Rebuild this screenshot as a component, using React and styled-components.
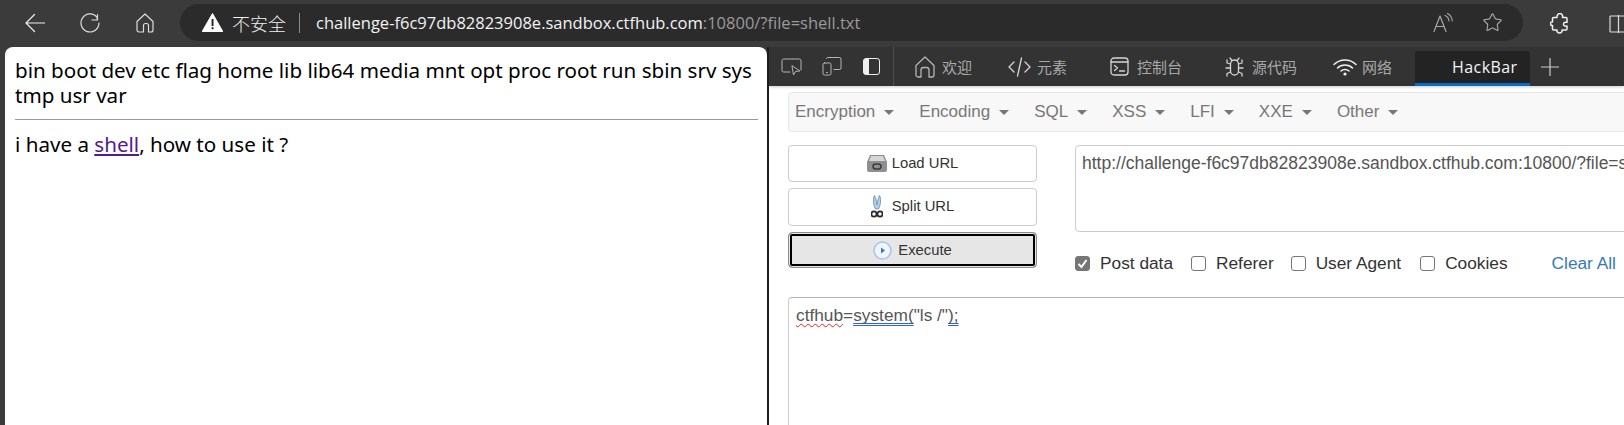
import styled, { createGlobalStyle } from "styled-components";
import { Star } from "lucide-react";

const Global = createGlobalStyle`
  html, body {
    margin: 0;
    padding: 0;
    background: #3b3b3b;
    overflow: hidden;
  }
`;

const Shell = styled.div`
  width: 1624px;
  height: 425px;
  display: flex;
  flex-direction: column;
  background: #3b3b3b;
  overflow: hidden;
`;

const TopBar = styled.div`
  height: 47px;
  flex: none;
  display: flex;
  align-items: flex-start;
  padding-left: 25px;
  box-sizing: border-box;
`;

const TopIcon = styled.svg`
  flex: none;
  margin-top: ${(p) => p.$top ?? 13}px;
  margin-left: ${(p) => p.$gap ?? 0}px;
`;

const Pill = styled.div`
  width: 1343px;
  height: 37px;
  margin: 4px 0 0 26px;
  flex: none;
  border-radius: 19px;
  background: #2b2b2b;
  display: flex;
  align-items: center;
  padding: 0 20px 0 22px;
  box-sizing: border-box;
`;

const Insecure = styled.span`
  margin-left: 9px;
  font: 300 18px "Noto Sans CJK SC", sans-serif;
  color: #f0f0f0;
`;

const PillSep = styled.span`
  width: 1px;
  height: 20px;
  background: #8a8a8a;
  margin: 0 16px 0 13px;
`;

const Url = styled.span`
  font: 16.5px "Open Sans", sans-serif;
  color: #9a9a9a;
  white-space: nowrap;

  b {
    font-weight: 400;
    color: #f2f2f2;
  }
`;

const PillRight = styled.div`
  margin-left: auto;
  display: flex;
  align-items: center;
  gap: 29px;
  color: #a8a8a8;
`;

const BarSep = styled.span`
  width: 1px;
  height: 20px;
  background: #666;
  margin: 14px 0 0 20px;
`;

const Main = styled.div`
  flex: 1;
  display: flex;
  padding-left: 5px;
  min-height: 0;
`;

const Page = styled.div`
  width: 762px;
  flex: none;
  background: #fff;
  border-radius: 8px 8px 0 0;
  box-sizing: border-box;
  padding: 11px 9px 0 10px;
  font: 20.6px/25px "Noto Sans", sans-serif;
  color: #000;

  a {
    color: #551a8b;
    text-decoration: underline;
  }
`;

const Rule = styled.hr`
  margin: 11px 0 12px;
  border: 0;
  height: 1px;
  background: #999;
`;

const Devtools = styled.div`
  flex: 1;
  min-width: 0;
  border-left: 2px solid #1c1c1c;
  background: #fff;
  overflow: hidden;
  display: flex;
  flex-direction: column;
`;

const Toolbar = styled.div`
  height: 39px;
  flex: none;
  background: #333;
  display: flex;
  align-items: center;
  padding-left: 12px;
  box-shadow: 0 1px 3px rgba(0, 0, 0, 0.2);
  color: #b5b5b5;
`;

const ToolIcon = styled.svg`
  flex: none;
  margin-left: ${(p) => p.$gap ?? 0}px;
`;

const ToolSep = styled.span`
  width: 1px;
  height: 39px;
  background: #4c4c4c;
  margin: 0 21px 0 13px;
`;

const Tab = styled.div`
  display: flex;
  align-items: center;
  flex: none;
  gap: ${(p) => p.$gap}px;
  margin-right: ${(p) => p.$after}px;
  font: 15px "Noto Sans CJK SC", sans-serif;
  color: #a8a8a8;
`;

const ActiveTab = styled.div`
  width: 115px;
  height: 35px;
  flex: none;
  margin-top: 3px;
  box-sizing: border-box;
  background: #232323;
  border-bottom: 3px solid #0a6bc2;
  border-radius: 3px 3px 0 0;
  padding: 0 0 0 37px;
  display: flex;
  align-items: center;
  font: 16px "Open Sans", sans-serif;
  letter-spacing: 0.4px;
  color: #f5f5f5;
`;

const Body = styled.div`
  padding: 6px 0 0 19px;
  width: 1000px;
  font-family: "Liberation Sans", sans-serif;
`;

const Nav = styled.div`
  height: 40px;
  box-sizing: border-box;
  background: #f8f8f8;
  border: 1px solid #e7e7e7;
  border-radius: 4px;
  padding-left: 6px;
  display: flex;
  align-items: center;
  gap: 25px;
  font-size: 17px;
  color: #777;
`;

const NavItem = styled.span`
  display: flex;
  align-items: center;
  gap: 9px;

  &::after {
    content: "";
    border-top: 5px solid #777;
    border-left: 5px solid transparent;
    border-right: 5px solid transparent;
  }
`;

const Controls = styled.div`
  display: flex;
  gap: 38px;
  margin-top: 13px;
`;

const Buttons = styled.div`
  width: 249px;
  flex: none;
  display: flex;
  flex-direction: column;
  gap: 6px;
`;

const Button = styled.div`
  height: ${(p) => p.$h}px;
  box-sizing: border-box;
  display: flex;
  align-items: center;
  justify-content: center;
  gap: ${(p) => p.$gap}px;
  padding-bottom: ${(p) => p.$lift ?? 0}px;
  border: 1px solid ${(p) => (p.$active ? "#8c8c8c" : "#ccc")};
  border-radius: 4px;
  font-size: 14.8px;
  color: #333;
  background: ${(p) => (p.$active ? "#e6e6e6" : "#fff")};
  box-shadow: ${(p) =>
    p.$active ? "inset 0 0 0 1px #e6e6e6, inset 0 0 0 3px #000" : "none"};
`;

const Right = styled.div`
  flex: 1;
  min-width: 0;
`;

const UrlBox = styled.div`
  height: 87px;
  box-sizing: border-box;
  border: 1px solid #ccc;
  border-radius: 4px;
  padding: 7px 6px;
  font-size: 17.5px;
  line-height: 20px;
  color: #555;
  white-space: nowrap;
  overflow: hidden;
`;

const Checks = styled.div`
  display: flex;
  align-items: center;
  height: 20px;
  margin-top: 21px;
  font-size: 17.3px;
  color: #333;
`;

const Check = styled.label`
  display: flex;
  align-items: center;
  gap: 10px;
  margin-right: ${(p) => p.$after}px;
`;

const Box = styled.span`
  width: 15px;
  height: 15px;
  box-sizing: border-box;
  border-radius: 3px;
  border: 1px solid #767676;
  background: ${(p) => (p.$on ? "#767676" : "#fff")};
  display: flex;
  align-items: center;
  justify-content: center;
`;

const ClearAll = styled.a`
  color: #337ab7;
`;

const PostBox = styled.div`
  height: 140px;
  margin-top: 24px;
  box-sizing: border-box;
  border: 1px solid #ccc;
  border-top-color: #b5b5b5;
  border-radius: 4px;
  padding: 7px 7px;
  font-size: 17.3px;
  line-height: 20px;
  color: #555;
`;

const Wavy = styled.span`
  text-decoration: underline wavy #e22;
  text-decoration-thickness: 1px;
  text-decoration-skip-ink: none;
  text-underline-offset: 2px;
`;

const Double = styled.span`
  text-decoration: underline double #2f5fe8;
  text-decoration-thickness: 1px;
  text-decoration-skip-ink: none;
  text-underline-offset: 2px;
`;

const line = {
  fill: "none",
  stroke: "currentColor",
  strokeLinecap: "round",
  strokeLinejoin: "round",
};

const NAV = ["Encryption", "Encoding", "SQL", "XSS", "LFI", "XXE", "Other"];

const CHECKS = [
  { label: "Post data", on: true, after: 18 },
  { label: "Referer", after: 17 },
  { label: "User Agent", after: 19 },
  { label: "Cookies", after: 44 },
];

export default function App() {
  return (
    <Shell>
      <Global />
      <TopBar>
        <TopIcon width="20" height="20" viewBox="0 0 20 20" $top={13} style={{ color: "#eee" }}>
          <path d="M19.5 10H1M9.5 1.5 1 10l8.5 8.5" {...line} strokeWidth="1.2" />
        </TopIcon>
        <TopIcon width="20" height="20" viewBox="0 0 20 20" $gap={35} style={{ color: "#ddd" }}>
          <path d="M17.5 1.5v5.5h-5.5M19 10a9 9 0 1 1-2-5.7L17.5 7" {...line} strokeWidth="1.2" />
        </TopIcon>
        <TopIcon width="18" height="20" viewBox="0 0 18 20" $gap={36} style={{ color: "#ddd" }}>
          <path d="M1 8.5 9 1l8 7.5V17a2 2 0 0 1-2 2h-2.5v-6.5a2 2 0 0 0-2-2h-1a2 2 0 0 0-2 2V19H3a2 2 0 0 1-2-2Z" {...line} strokeWidth="1.2" />
        </TopIcon>
        <Pill>
          <svg width="21" height="19" viewBox="0 0 21 19">
            <path d="M10.5 0.5 20.8 18.5H0.2Z" fill="#fff" stroke="#fff" strokeLinejoin="round" />
            <rect x="9.6" y="6" width="1.9" height="7" fill="#222" />
            <rect x="9.6" y="14.2" width="1.9" height="2" fill="#222" />
          </svg>
          <Insecure>不安全</Insecure>
          <PillSep />
          <Url>
            <b>challenge-f6c97db82823908e.sandbox.ctfhub.com</b>:10800/?file=shell.txt
          </Url>
          <PillRight>
            <svg width="20" height="20" viewBox="0 0 20 20">
              <path d="M1 18.5 7 3l6 15.5M3 13.5h8" {...line} strokeWidth="1.2" />
              <path d="M12 2.5c2.5 1 3.8 3 4 5.5M14.5 0.5c3 1.5 4.5 4 4.8 7.5" {...line} strokeWidth="1.1" />
            </svg>
            <Star size={21} strokeWidth={1.3} />
          </PillRight>
        </Pill>
        <TopIcon width="20" height="21" viewBox="0 0 20 21" $gap={27} $top={13} style={{ color: "#f0f0f0" }}>
          <path
            d="M7 4.5H3.5a1 1 0 0 0-1 1V9c-1.300-.4-2 .6-2 1.700s.7 2.100 2 1.700V16a1 1 0 0 0 1 1H7c-.5 1.500.7 3 2.500 3s3-1.500 2.500-3h4a1 1 0 0 0 1-1v-3c-2 .6-3.500-.3-3.500-1.800S15 8.800 17 9.400V5.500a1 1 0 0 0-1-1h-3.500c.6-1.500-.6-4-2.600-4S6.700 3 7 4.500Z"
            {...line}
            strokeWidth="1.5"
          />
        </TopIcon>
        <BarSep />
        <TopIcon width="15" height="18" viewBox="0 0 15 18" $gap={19} $top={15} style={{ color: "#ddd" }}>
          <path d="M15 1H2a1 1 0 0 0-1 1v14a1 1 0 0 0 1 1h13M9.500 0v18" {...line} strokeWidth="1.2" />
        </TopIcon>
      </TopBar>
      <Main>
        <Page>
          bin boot dev etc flag home lib lib64 media mnt opt proc root run sbin srv sys tmp usr var
          <Rule />
          i have a <a href="#shell">shell</a>, how to use it ?
        </Page>
        <Devtools>
          <Toolbar>
            <ToolIcon width="21" height="18" viewBox="0 0 21 18">
              <path d="M9 14H2.500A1.500 1.500 0 0 1 1 12.500v-10A1.500 1.500 0 0 1 2.500 1h16A1.500 1.500 0 0 1 20 2.500V12" {...line} />
              <path d="M11 8l1.500 9 2-3.500 4-.5Z" {...line} />
            </ToolIcon>
            <ToolIcon width="20" height="19" viewBox="0 0 20 19" $gap={20}>
              <rect x="1" y="6" width="8" height="12" rx="1.500" {...line} />
              <path d="M4.500 1.500a1 1 0 0 1 1-1h12a1.500 1.500 0 0 1 1.500 1.500v9a1.500 1.500 0 0 1-1.500 1.500H12M4.500 15.500h1" {...line} />
            </ToolIcon>
            <ToolIcon width="17" height="17" viewBox="0 0 17 17" $gap={21}>
              <rect x="0.5" y="0.5" width="16" height="16" rx="2.5" fill="none" stroke="#eee" />
              <path d="M3 0.5h3v16H3a2.500 2.500 0 0 1-2.500-2.500V3A2.500 2.500 0 0 1 3 0.5Z" fill="#eee" />
            </ToolIcon>
            <ToolSep />
            <Tab $gap={7} $after={36}>
              <svg width="20" height="22" viewBox="0 0 20 22" color="#b5b5b5">
                <path d="M1 9.500 10 1l9 8.500V19a2 2 0 0 1-2 2h-3v-7a2.500 2.500 0 0 0-2.500-2.500h-3A2.500 2.500 0 0 0 6 14v7H3a2 2 0 0 1-2-2Z" {...line} strokeWidth="1.3" />
              </svg>
              欢迎
            </Tab>
            <Tab $gap={6} $after={43}>
              <svg width="23" height="20" viewBox="0 0 23 20" color="#d5d5d5">
                <path d="M6 5 1 10l5 5M17 5l5 5-5 5M13.500 1l-4 18" {...line} strokeWidth="1.3" />
              </svg>
              元素
            </Tab>
            <Tab $gap={8} $after={43}>
              <svg width="19" height="19" viewBox="0 0 19 19" color="#d5d5d5">
                <rect x="1" y="1" width="17" height="17" rx="3" {...line} strokeWidth="1.3" />
                <path d="M1 5h17M4.500 8.500 7.500 11l-3 2.500M9.500 14h5" {...line} strokeWidth="1.3" />
              </svg>
              控制台
            </Tab>
            <Tab $gap={8} $after={36}>
              <svg width="19" height="20" viewBox="0 0 19 20" color="#d5d5d5">
                <path d="M5.500 7a4 4 0 0 1 8 0v7a4 4 0 0 1-8 0ZM6.500 3 5 1M12.500 3 14 1M5.500 7 2 6V3M13.500 7 17 6V3M5.500 11H1M13.500 11H18M5.500 15 2 16.500V19M13.500 15l3.500 1.500V19" {...line} strokeWidth="1.3" />
              </svg>
              源代码
            </Tab>
            <Tab $gap={5} $after={23}>
              <svg width="24" height="18" viewBox="0 0 24 18" color="#eee">
                <path d="M1 6.500c6-6 16-6 22 0M4.500 10c4-4 11-4 15 0M8 13c2-2 6-2 8 0" {...line} strokeWidth="1.5" />
                <circle cx="12" cy="16" r="1.600" fill="currentColor" />
              </svg>
              网络
            </Tab>
            <ActiveTab>HackBar</ActiveTab>
            <ToolIcon width="18" height="18" viewBox="0 0 18 18" $gap={11} style={{ color: "#ccc" }}>
              <path d="M9 0.5v17M0.5 9h17" {...line} strokeWidth="1.2" />
            </ToolIcon>
          </Toolbar>
          <Body>
            <Nav>
              {NAV.map((item) => (
                <NavItem key={item}>{item}</NavItem>
              ))}
            </Nav>
            <Controls>
              <Buttons>
                <Button $h={37} $gap={5} $lift={2}>
                  <svg width="20" height="18" viewBox="0 0 20 18">
                    <path d="M3 1h14l3 7v8a2 2 0 0 1-2 2H2a2 2 0 0 1-2-2V8Z" fill="#8f8f8f" />
                    <path d="M4 2h12l2 5H2Z" fill="#d6d6d6" />
                    <rect x="6" y="10" width="8" height="5" rx="2.5" fill="none" stroke="#3c3c3c" strokeWidth="1.5" />
                  </svg>
                  Load URL
                </Button>
                <Button $h={38} $gap={9} $lift={2}>
                  <svg width="12" height="23" viewBox="0 0 12 23">
                    <path d="M3.500 0.500C2 3 1.800 9 4.500 14h3C10.200 9 10 3 8.500 0.500 7 3 6.500 7 6 10 5.500 7 5 3 3.500 0.500Z" fill="#b4d0e2" stroke="#5d8ba6" strokeWidth="0.8" />
                    <circle cx="3" cy="19" r="2.600" fill="none" stroke="#2a2a2a" strokeWidth="1.800" />
                    <circle cx="9" cy="19" r="2.600" fill="none" stroke="#2a2a2a" strokeWidth="1.800" />
                  </svg>
                  Split URL
                </Button>
                <Button $h={36} $gap={6} $active>
                  <svg width="19" height="19" viewBox="0 0 19 19">
                    <circle cx="9.5" cy="9.5" r="8.500" fill="#f0f5fb" stroke="#a9c6e6" strokeWidth="1.600" />
                    <path d="M8 6.500 12 9.500 8 12.500Z" fill="#3f76b8" />
                  </svg>
                  Execute
                </Button>
              </Buttons>
              <Right>
                <UrlBox>http://challenge-f6c97db82823908e.sandbox.ctfhub.com:10800/?file=shell.txt</UrlBox>
                <Checks>
                  {CHECKS.map(({ label, on, after }) => (
                    <Check key={label} $after={after}>
                      <Box $on={on}>
                        {on && (
                          <svg width="11" height="11" viewBox="0 0 11 11">
                            <path d="M1.500 6 4.500 9 9.500 2" fill="none" stroke="#fff" strokeWidth="2" />
                          </svg>
                        )}
                      </Box>
                      {label}
                    </Check>
                  ))}
                  <ClearAll>Clear All</ClearAll>
                </Checks>
              </Right>
            </Controls>
            <PostBox>
              <Wavy>ctfhub</Wavy>=<Double>system(</Double>"ls /"<Double>);</Double>
            </PostBox>
          </Body>
        </Devtools>
      </Main>
    </Shell>
  );
}
